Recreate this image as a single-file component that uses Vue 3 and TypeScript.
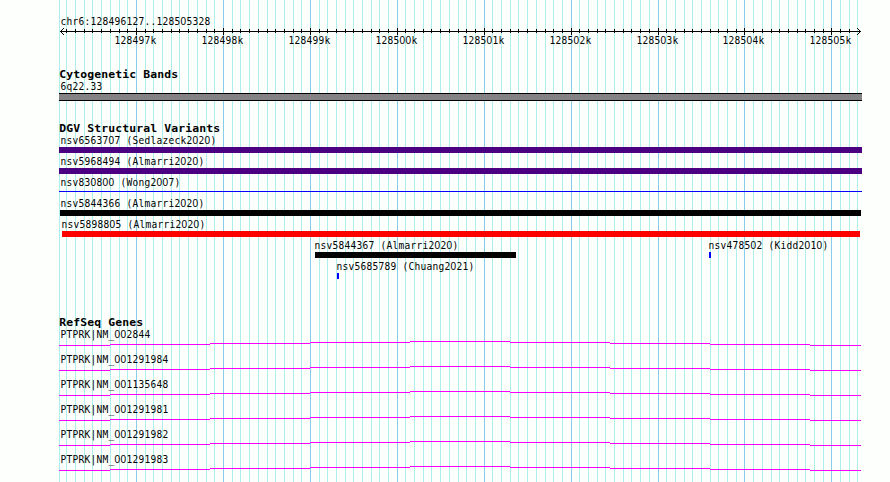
<script setup lang="ts">
interface Run { text: string; xs: string; zero: boolean }
interface Label { text: string; x: number; y: number; bold?: boolean }
interface Variant { name: string; label: number; start: number; end: number; row: number; color: string; thin?: boolean }

const SMALL = 6
const BOLD = 7
const SX = 0.87
const BOLD_SX = 1.04

/* Places every character in a fixed-width cell; zeros use a plain, undotted face. */
function runs(l: Label): Run[] {
  const cell = l.bold ? BOLD : SMALL
  const out: Run[] = []
  const sx = l.bold ? BOLD_SX : SX
  let i = 0
  for (const part of l.text.match(/0+|[^0]+/g) ?? []) {
    const xs = [...part].map((_, k) => ((l.x + (i + k) * cell + cell / 2 + 0.3) / sx).toFixed(2)).join(' ')
    out.push({ text: part, xs, zero: part[0] === '0' })
    i += part.length
  }
  return out
}

const minor = [
  59, 66, 75, 84, 92, 101, 110, 119, 127, 145, 153, 162, 171, 179, 188, 197, 206, 214, 232, 240, 249, 258, 267, 275,
  284, 293, 301, 319, 327, 336, 345, 353, 362, 371, 379, 388, 405, 414, 423, 431, 440, 449, 458, 466, 475, 492, 501,
  510, 518, 527, 536, 545, 553, 562, 579, 588, 597, 605, 614, 623, 631, 640, 649, 666, 675, 684, 692, 701, 710, 718,
  727, 736, 753, 762, 771, 779, 788, 797, 805, 814, 823, 840, 849, 857,
]
const major = [136, 223, 310, 397, 484, 571, 658, 744, 831]
const ticks = minor.filter((x) => x > 60 && x < 857)
const arrow = [0, 1, 2, 3]

const rulerLabels: Label[] = [
  { text: 'chr6:128496127..128505328', x: 60, y: 25 },
  ...major.map((x, i) => ({ text: `${128497 + i}k`, x: x - 22, y: 44 })),
]
const bandLabels: Label[] = [
  { text: 'Cytogenetic Bands', x: 59, y: 78, bold: true },
  { text: '6q22.33', x: 60, y: 90 },
]
const variants: Variant[] = [
  { name: 'nsv6563707 (Sedlazeck2020)', label: 60, start: 59, end: 862, row: 0, color: '#4b0082' },
  { name: 'nsv5968494 (Almarri2020)', label: 60, start: 59, end: 862, row: 1, color: '#4b0082' },
  { name: 'nsv830800 (Wong2007)', label: 60, start: 59, end: 862, row: 2, color: '#0000ff', thin: true },
  { name: 'nsv5844366 (Almarri2020)', label: 60, start: 60, end: 861, row: 3, color: '#000000' },
  { name: 'nsv5898805 (Almarri2020)', label: 61, start: 62, end: 860, row: 4, color: '#ff0000' },
  { name: 'nsv5844367 (Almarri2020)', label: 314, start: 315, end: 516, row: 5, color: '#000000' },
  { name: 'nsv478502 (Kidd2010)', label: 708, start: 709, end: 711, row: 5, color: '#0000ff' },
  { name: 'nsv5685789 (Chuang2021)', label: 336, start: 337, end: 339, row: 6, color: '#0000ff' },
]
const variantLabels: Label[] = [
  { text: 'DGV Structural Variants', x: 59, y: 132, bold: true },
  ...variants.map((v) => ({ text: v.name, x: v.label, y: 144 + v.row * 21 })),
]
const genes = ['002844', '001291984', '001135648', '001291981', '001291982', '001291983']
const geneLabels: Label[] = [
  { text: 'RefSeq Genes', x: 59, y: 326, bold: true },
  ...genes.map((g, i) => ({ text: `PTPRK|NM_${g}`, x: 60, y: 338 + i * 25 })),
]
const stops = [59, 110, 210, 310, 410, 510, 610, 710, 810, 861]
const rises = [4, 3, 2, 1, 0, 1, 2, 3, 4]

const panels = [
  { id: 'ruler', top: 0, height: 60, labels: rulerLabels },
  { id: 'bands', top: 60, height: 55, labels: bandLabels },
  { id: 'variants', top: 115, height: 195, labels: variantLabels },
  { id: 'genes', top: 310, height: 172, labels: geneLabels },
]
</script>

<template>
  <main class="browser">
    <svg v-for="p in panels" :key="p.id" class="panel" width="890" :height="p.height" :viewBox="`0 ${p.top} 890 ${p.height}`">
      <rect v-for="x in minor" :key="x" class="minor" :x="x" :y="p.top" width="1" :height="p.height" />
      <rect v-for="x in major" :key="x" class="major" :x="x" :y="p.top" width="1" :height="p.height" />

      <g v-if="p.id === 'ruler'">
        <rect x="60" y="31" width="801" height="1" />
        <rect v-for="x in ticks" :key="x" :x="x" y="29" width="1" height="4" />
        <rect v-for="x in major" :key="x" :x="x" y="28" width="1" height="7" />
        <g v-for="d in arrow" :key="d">
          <rect :x="60 + d" :y="31 - d" width="1" height="1" />
          <rect :x="60 + d" :y="31 + d" width="1" height="1" />
          <rect :x="860 - d" :y="31 - d" width="1" height="1" />
          <rect :x="860 - d" :y="31 + d" width="1" height="1" />
        </g>
      </g>

      <g v-if="p.id === 'bands'">
        <rect x="59" y="93" width="803" height="8" />
        <rect class="band" x="59" y="94" width="803" height="6" />
      </g>

      <g v-if="p.id === 'variants'">
        <rect
          v-for="v in variants" :key="v.name" :x="v.start" :y="(v.thin ? 149 : 147) + v.row * 21"
          :width="v.end - v.start" :height="v.thin ? 1 : 6" :fill="v.color"
        />
      </g>

      <g v-if="p.id === 'genes'" class="introns">
        <g v-for="(g, i) in genes" :key="g">
          <rect
            v-for="(r, k) in rises" :key="k" :x="stops[k]" :y="341 + r + i * 25"
            :width="stops[k + 1] - stops[k]" height="1"
          />
        </g>
      </g>

      <text
        v-for="l in p.labels" :key="l.text" :class="l.bold ? 'title' : 'label'" :y="l.y"
        :transform="`scale(${l.bold ? BOLD_SX : SX} 1)`"
      ><tspan v-for="(r, k) in runs(l)" :key="k" :x="r.xs" :class="{ zero: r.zero }">{{ r.text }}</tspan></text>
    </svg>
  </main>
</template>

<style scoped>
.browser {
  display: flex;
  flex-direction: column;
  width: 890px;
  height: 482px;
  overflow: hidden;
  background: #fdfffc;
}
.panel {
  display: block;
  flex: none;
  shape-rendering: crispEdges;
}
.minor { fill: #afeeee; }
.major { fill: #87ceeb; }
.band { fill: #848284; }
.introns { fill: #ff00ff; }
.label,
.title {
  fill: #000;
  text-anchor: middle;
  font-family: "DejaVu Sans Mono", monospace;
  font-size: 11px;
  white-space: pre;
}
.title {
  font-weight: bold;
}
.zero {
  font-family: "Liberation Sans", sans-serif;
  font-size: 11.6px;
}
</style>

<style>
body {
  background: #fdfffc;
}
</style>
